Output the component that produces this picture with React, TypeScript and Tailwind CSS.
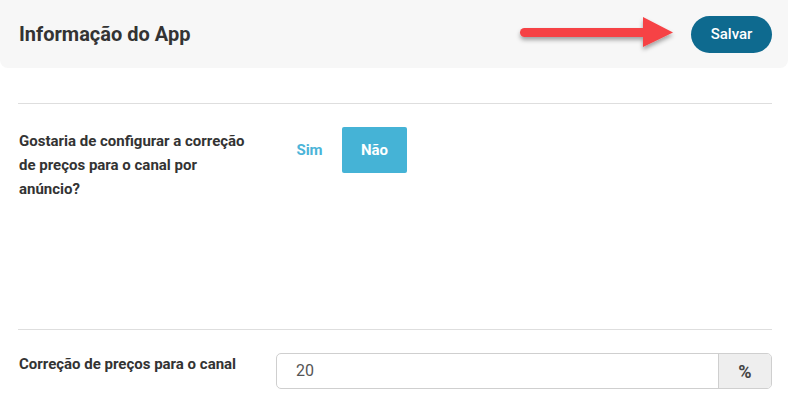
const font = { fontFamily: "Roboto, 'Liberation Sans', sans-serif" };

const Arrow = () => (
  <svg
    className="absolute left-[512px] top-[12px]"
    width="170"
    height="44"
    viewBox="0 0 170 44"
  >
    <defs>
      <filter id="sh" x="-10%" y="-30%" width="130%" height="180%">
        <feDropShadow dx="0" dy="3" stdDeviation="2" floodColor="#000" floodOpacity="0.35" />
      </filter>
    </defs>
    <g filter="url(#sh)">
      <line x1="12.5" y1="20.5" x2="134" y2="20.5" stroke="#f64245" strokeWidth="9" strokeLinecap="round" />
      <polygon points="131,5 161,20.5 131,35" fill="#f64245" />
    </g>
  </svg>
);

export default function App() {
  return (
    <div className="relative w-[790px] h-[397px] bg-white overflow-hidden text-[#333]" style={font}>
      <div className="flex items-center justify-between h-[68px] w-[788px] bg-[#f7f7f7] rounded-b-lg pl-[19px] pr-[16px]">
        <h1 className="text-[20px] font-bold">Informação do App</h1>
        <button className="w-[81px] h-[37px] rounded-full bg-[#0e6a8f] text-white text-[15px] font-medium">
          Salvar
        </button>
      </div>
      <Arrow />

      <div className="px-[18px]">
        <div className="mt-[35px] border-t border-[#dedede]" />
        <div className="flex pt-[23px] h-[225px]">
          <div className="w-[259px] pl-[1px] pt-[2px]">
            <p className="w-[236px] text-[15px] font-bold leading-[24px]">
              Gostaria de configurar a correção de preços para o canal por anúncio?
            </p>
          </div>
          <div className="flex">
            <button className="w-[65px] h-[46px] text-[15px] font-bold text-[#4bb4d8]">Sim</button>
            <button className="w-[65px] h-[46px] rounded-[2px] bg-[#45b3d6] text-[15px] font-bold text-white">
              Não
            </button>
          </div>
        </div>
        <div className="border-t border-[#dedede]" />
        <div className="flex pt-[23px]">
          <div className="w-[258px] pl-[1px] pt-[1px] text-[15px] font-bold leading-[20px]">
            Correção de preços para o canal
          </div>
          <div className="flex flex-1 h-[36px] rounded-[5px] border border-[#cfcfcf] overflow-hidden">
            <div className="flex-1 flex items-center pl-[19px] text-[16px] text-[#555]">20</div>
            <div className="w-[53px] flex items-center justify-center bg-[#eeeeee] border-l border-[#cfcfcf] text-[18px] font-bold text-[#444]">
              %
            </div>
          </div>
        </div>
      </div>
    </div>
  );
}
